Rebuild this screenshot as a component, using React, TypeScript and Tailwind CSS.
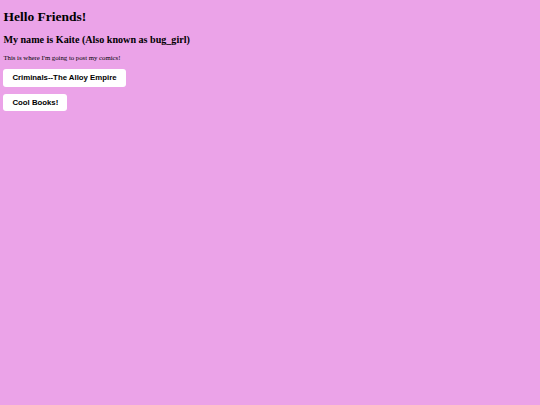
export default function App() {
	return (
		<div className="min-h-screen bg-[#eba3e8] px-[3.4px] pt-[9px] flex flex-col items-start">
			<h1 className="font-['Liberation_Serif',serif] font-bold text-[13.5px] leading-[15.5px] text-black">
				Hello Friends!
			</h1>
			<h2 className="mt-[9px] font-['Liberation_Serif',serif] font-bold text-[10.1px] leading-[11.7px] text-black">
				My name is Kaite (Also known as bug_girl)
			</h2>
			<p className="mt-[8.4px] font-['Liberation_Serif',serif] text-[6.75px] leading-[7.8px] text-black">
				This is where I'm going to post my comics!
			</p>
			<button className="mt-[7.2px] h-[18px] px-[9px] rounded-[3px] bg-white font-['Liberation_Sans',Arial,sans-serif] font-bold text-[7.8px] text-black">
				Criminals--The Alloy Empire
			</button>
			<button className="mt-[7.7px] h-[17px] px-[9px] rounded-[3px] bg-white font-['Liberation_Sans',Arial,sans-serif] font-bold text-[7.8px] text-black">
				Cool Books!
			</button>
		</div>
	);
}
